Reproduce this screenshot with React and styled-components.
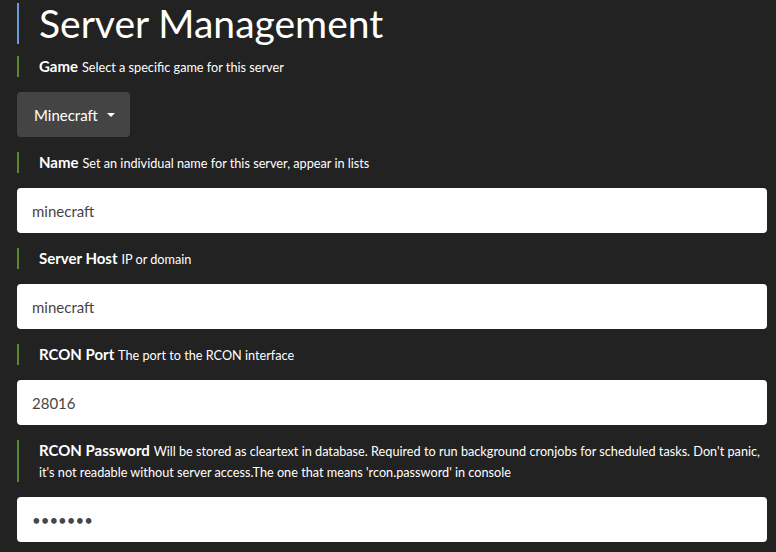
import { useState } from "react";
import styled, { createGlobalStyle } from "styled-components";

const GlobalStyle = createGlobalStyle`
    body {
        margin: 0;
        background: #222;
        color: #fff;
        font-family: Lato, "Noto Sans", sans-serif;
    }
`

const Page = styled.div`
    padding: 3px 9px 0 17px;
`

const Title = styled.h1`
    margin: 0 0 12px;
    padding-left: 20px;
    border-left: 2px solid #6b9bd8;
    font-size: 39px;
    font-weight: 400;
    line-height: 41px;
`

const Label = styled.div`
    margin-bottom: 15px;
    padding-left: 20px;
    border-left: 2px solid #5a8a2e;
    font-size: 15px;
    line-height: 21px;

    b {
        font-weight: 700;
    }
`

const Hint = styled.span`
    font-size: 12.7px;
    line-height: 1;
`

const Dropdown = styled.button`
    display: flex;
    align-items: center;
    gap: 9px;
    height: 45px;
    margin-bottom: 15px;
    padding: 0 15px 0 17px;
    border: none;
    border-radius: 4px;
    background: #444;
    color: #fff;
    font-family: inherit;
    font-size: 15px;
`

const Caret = styled.span`
    width: 0;
    height: 0;
    border-left: 4px solid transparent;
    border-right: 4px solid transparent;
    border-top: 4px solid #fff;
`

const Input = styled.input`
    display: block;
    box-sizing: border-box;
    width: 100%;
    height: 45px;
    margin: 0 0 15px;
    padding: 0 15px;
    border: none;
    border-radius: 4px;
    background: #fff;
    color: #464646;
    font-family: inherit;
    font-size: 15px;
    outline: none;
`

const fields = [
    { key: "name", label: "Name", hint: "Set an individual name for this server, appear in lists", value: "minecraft" },
    { key: "host", label: "Server Host", hint: "IP or domain", value: "minecraft" },
    { key: "port", label: "RCON Port", hint: "The port to the RCON interface", value: "28016" },
    {
        key: "password",
        label: "RCON Password",
        hint: "Will be stored as cleartext in database. Required to run background cronjobs for scheduled tasks. Don't panic, it's not readable without server access.The one that means 'rcon.password' in console",
        value: "1234567",
        type: "password",
    },
]

export default function App() {
    const [values, setValues] = useState(() => Object.fromEntries(fields.map(f => [f.key, f.value])))

    return (
        <>
            <GlobalStyle />
            <Page>
                <Title>Server Management</Title>
                <Label><b>Game</b> <Hint>Select a specific game for this server</Hint></Label>
                <Dropdown>Minecraft <Caret /></Dropdown>
                {fields.map(f => (
                    <div key={f.key}>
                        <Label><b>{f.label}</b> <Hint>{f.hint}</Hint></Label>
                        <Input
                            type={f.type || "text"}
                            value={values[f.key]}
                            onChange={e => setValues({ ...values, [f.key]: e.target.value })}
                        />
                    </div>
                ))}
            </Page>
        </>
    )
}
